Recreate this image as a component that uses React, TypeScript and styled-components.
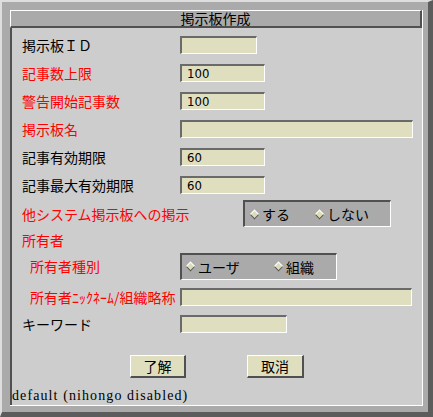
import styled, { createGlobalStyle } from "styled-components";

const GlobalStyle = createGlobalStyle`
  html, body {
    margin: 0;
    padding: 0;
    background: #aaaaaa;
  }
  body {
    font-family: "Noto Sans CJK JP", "Noto Sans", sans-serif;
  }
`;

const Window = styled.div`
  width: 433px;
  height: 417px;
  box-sizing: border-box;
  display: flex;
  background: #aaaaaa;
  border-top: 2px solid #dedede;
  border-left: 2px solid #dedede;
  border-right: 5px solid #5c5c5c;
  border-bottom: 5px solid #5c5c5c;
  padding: 8px 5px 6px 8px;
`;

const Panel = styled.div`
  flex: 1;
  display: flex;
  flex-direction: column;
  border-right: 1px solid #ffffff;
  border-bottom: 1px solid #ffffff;
`;

const TitleBar = styled.div`
  height: 18px;
  box-sizing: border-box;
  background: #aaaaaa;
  border-top: 1px solid #ffffff;
  border-left: 1px solid #ffffff;
  border-right: 2px solid #505050;
  border-bottom: 2px solid #505050;
  text-align: center;
  font-size: 14px;
  line-height: 15px;
  color: #000;
`;

const Body = styled.div`
  flex: 1;
  display: flex;
  flex-direction: column;
  background: #cdcdcd;
  border-left: 2px solid #505050;
  padding-top: 3px;
`;

const Form = styled.div`
  display: flex;
  flex-direction: column;
  padding-left: 10px;
`;

const Row = styled.div<{ $h: number }>`
  display: flex;
  align-items: center;
  height: ${({ $h }) => $h}px;
`;

const Label = styled.span<{ $red?: boolean; $indent?: boolean }>`
  width: 158px;
  box-sizing: border-box;
  padding-left: ${({ $indent }) => ($indent ? 8 : 0)}px;
  flex-shrink: 0;
  white-space: nowrap;
  font-size: 14px;
  line-height: 16px;
  color: ${({ $red }) => ($red ? "#ff0000" : "#000000")};
`;

const Field = styled.input<{ $w: number }>`
  width: ${({ $w }) => $w}px;
  height: 18px;
  box-sizing: border-box;
  margin: 0;
  padding: 0 0 0 5px;
  background: #dfdfc0;
  border-top: 2px solid #6a6a6a;
  border-left: 2px solid #6a6a6a;
  border-right: 1px solid #ffffff;
  border-bottom: 1px solid #ffffff;
  font-family: "DejaVu Sans Condensed", "Liberation Sans", sans-serif;
  font-size: 13px;
  color: #000;
  outline: none;
`;

const RadioBox = styled.div<{ $w: number; $offset?: number; $pad: number }>`
  width: ${({ $w }) => $w}px;
  height: 27px;
  box-sizing: border-box;
  margin-left: ${({ $offset }) => $offset ?? 0}px;
  display: flex;
  align-items: center;
  padding-left: ${({ $pad }) => $pad}px;
  background: #aaaaaa;
  border-top: 2px solid #505050;
  border-left: 2px solid #505050;
  border-right: 1px solid #ffffff;
  border-bottom: 1px solid #ffffff;
`;

const Option = styled.label<{ $w?: number }>`
  display: flex;
  align-items: center;
  gap: 3px;
  width: ${({ $w }) => ($w ? `${$w}px` : "auto")};
  font-size: 14px;
  line-height: 16px;
  color: #000;
`;

const Diamond = styled.span`
  display: inline-block;
  width: 5px;
  height: 5px;
  margin: 0 1px;
  background: #dcdcb8;
  border-top: 1px solid #ffffff;
  border-left: 1px solid #ffffff;
  border-right: 1px solid #555555;
  border-bottom: 1px solid #555555;
  transform: rotate(45deg);
`;

const Buttons = styled.div`
  display: flex;
  gap: 61px;
  margin: 21px 0 0 108px;
`;

const Btn = styled.button<{ $w: number }>`
  width: ${({ $w }) => $w}px;
  height: 23px;
  box-sizing: border-box;
  padding: 0;
  background: #dfdfc0;
  border-top: 1px solid #ffffff;
  border-left: 1px solid #ffffff;
  border-right: 2px solid #505050;
  border-bottom: 2px solid #505050;
  font-family: "Noto Sans CJK JP", "Noto Sans", sans-serif;
  font-size: 14px;
  line-height: 16px;
  color: #000;
`;

const Footer = styled.div`
  margin-top: auto;
  padding-bottom: 1px;
  font-family: "Liberation Serif", "Times New Roman", serif;
  font-size: 14px;
  letter-spacing: 1.1px;
  line-height: 16px;
  color: #000;
`;

export default function App() {
  return (
    <>
      <GlobalStyle />
      <Window>
        <Panel>
          <TitleBar>掲示板作成</TitleBar>
          <Body>
            <Form>
              <Row $h={28}>
                <Label>掲示板ＩＤ</Label>
                <Field $w={77} defaultValue="" />
              </Row>
              <Row $h={28}>
                <Label $red>記事数上限</Label>
                <Field $w={85} defaultValue="100" />
              </Row>
              <Row $h={28}>
                <Label $red>警告開始記事数</Label>
                <Field $w={85} defaultValue="100" />
              </Row>
              <Row $h={28}>
                <Label $red>掲示板名</Label>
                <Field $w={233} defaultValue="" />
              </Row>
              <Row $h={28}>
                <Label>記事有効期限</Label>
                <Field $w={85} defaultValue="60" />
              </Row>
              <Row $h={28}>
                <Label>記事最大有効期限</Label>
                <Field $w={85} defaultValue="60" />
              </Row>
              <Row $h={29}>
                <Label $red>他システム掲示板への掲示</Label>
                <RadioBox $w={148} $offset={63} $pad={5}>
                  <Option $w={65}>
                    <Diamond />
                    する
                  </Option>
                  <Option>
                    <Diamond />
                    しない
                  </Option>
                </RadioBox>
              </Row>
              <Row $h={24}>
                <Label $red>所有者</Label>
              </Row>
              <Row $h={28}>
                <Label $red $indent>
                  所有者種別
                </Label>
                <RadioBox $w={157} $pad={4}>
                  <Option $w={88}>
                    <Diamond />
                    ユーザ
                  </Option>
                  <Option>
                    <Diamond />
                    組織
                  </Option>
                </RadioBox>
              </Row>
              <Row $h={34}>
                <Label $red $indent>
                  所有者ﾆｯｸﾈｰﾑ/組織略称
                </Label>
                <Field $w={232} defaultValue="" />
              </Row>
              <Row $h={20}>
                <Label>キーワード</Label>
                <Field $w={107} defaultValue="" />
              </Row>
              <Buttons>
                <Btn $w={56}>了解</Btn>
                <Btn $w={57}>取消</Btn>
              </Buttons>
            </Form>
            <Footer>default (nihongo disabled)</Footer>
          </Body>
        </Panel>
      </Window>
    </>
  );
}
